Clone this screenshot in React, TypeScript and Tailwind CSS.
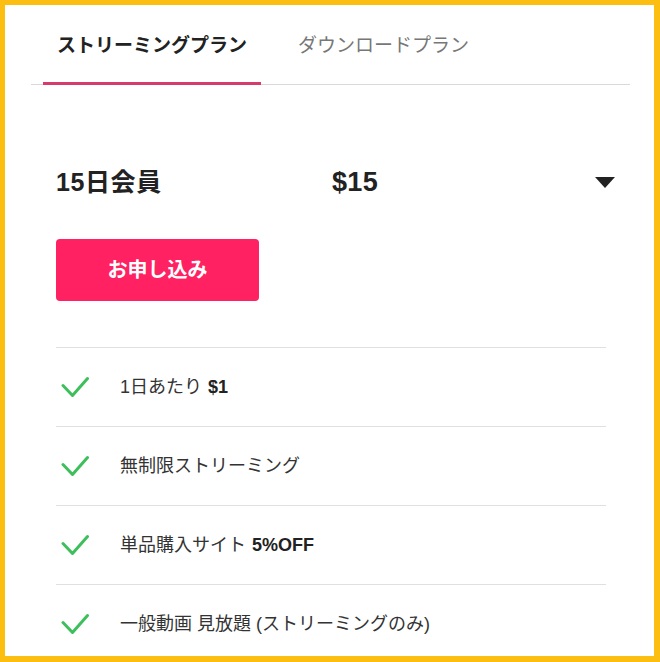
import { useState } from 'react';

const features: { text: string; bold?: string }[] = [
  { text: '1日あたり', bold: '$1' },
  { text: '無制限ストリーミング' },
  { text: '単品購入サイト', bold: '5%OFF' },
  { text: '一般動画 見放題 (ストリーミングのみ)' },
];

function CheckMark() {
  return (
    <svg width="28" height="22" viewBox="0 0 28 22" fill="none" className="shrink-0">
      <path d="M2 9.5 11.5 19.5 26.5 2.5" stroke="#3dbf5c" strokeWidth="3" strokeLinecap="round" strokeLinejoin="round" />
    </svg>
  );
}

export default function App() {
  const [tab, setTab] = useState<'stream' | 'download'>('stream');

  return (
    <div
      className="h-[662px] w-[660px] overflow-hidden border-t-[5px] border-r-[6px] border-b-[6px] border-l-[5px] border-[#fdbe12] bg-white text-[#222]"
      style={{ fontFamily: '"Liberation Sans", "Noto Sans CJK JP", sans-serif' }}
    >
      {/* tabs */}
      <div className="mr-[24px] ml-[26px] flex border-b border-[#d9d9d9] pl-[12px]">
        <button
          onClick={() => setTab('stream')}
          className={`-mb-px border-b-[3px] px-[14px] pt-[27px] pb-[22px] text-[19px] leading-[28px] font-bold ${tab === 'stream' ? 'border-[#d83a6c] text-[#222]' : 'border-transparent text-[#777]'}`}
        >
          ストリーミングプラン
        </button>
        <button
          onClick={() => setTab('download')}
          className={`-mb-px ml-[23px] border-b-[3px] px-[14px] pt-[27px] pb-[22px] text-[19px] leading-[28px] ${tab === 'download' ? 'border-[#d83a6c] font-bold text-[#222]' : 'border-transparent text-[#777]'}`}
        >
          ダウンロードプラン
        </button>
      </div>

      <div className="pl-[51px]">
        {/* plan row */}
        <div className="mt-[81px] flex w-[560px] items-center text-[25px] leading-[32px] font-bold">
          <span className="w-[276px] tracking-[0.6px]">15日会員</span>
          <span className="text-[27px] tracking-[0.3px]">$15</span>
          <span className="flex-1" />
          <svg width="20" height="11" viewBox="0 0 20 11" className="mr-[1px]">
            <path d="M0 0h20L10 11z" fill="#222" />
          </svg>
        </div>

        <button className="mt-[41px] flex h-[62px] w-[203px] items-center justify-center rounded-[4px] bg-[#ff2161] text-[20px] font-bold text-white">
          お申し込み
        </button>

        {/* features */}
        <ul className="mt-[46px] w-[550px]">
          {features.map((f) => (
            <li key={f.text} className="flex h-[79px] items-center border-t border-[#e0e0e0] pl-[5px] text-[18px] text-[#333]">
              <CheckMark />
              <span className="ml-[31px]">
                {f.text}
                {f.bold && <b className="ml-[6px] font-bold text-[#222]">{f.bold}</b>}
              </span>
            </li>
          ))}
        </ul>
      </div>
    </div>
  );
}
